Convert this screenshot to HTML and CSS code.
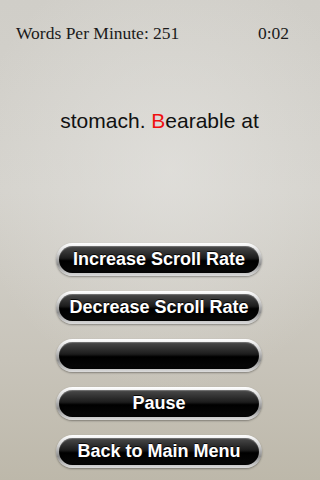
FILE: index.html
```html
<!DOCTYPE html>
<html>
<head>
<meta charset="utf-8">
<link rel="stylesheet" href="styles.css">
</head>
<body>
<div class="screen">
  <div class="header">
    <span class="wpm">Words Per Minute: 251</span>
    <span class="time">0:02</span>
  </div>
  <div class="reader">stomach. <span class="hl">B</span>earable at</div>
  <div class="buttons">
    <div class="btn"><span>Increase Scroll Rate</span></div>
    <div class="btn"><span>Decrease Scroll Rate</span></div>
    <div class="btn"><span></span></div>
    <div class="btn"><span>Pause</span></div>
    <div class="btn"><span>Back to Main Menu</span></div>
  </div>
</div>
</body>
</html>
```
FILE: styles.css
```css
html, body {
  margin: 0;
  padding: 0;
}
.screen {
  width: 320px;
  height: 480px;
  overflow: hidden;
  display: flex;
  flex-direction: column;
  background:
    radial-gradient(ellipse 200px 220px at 170px 170px, rgba(230,229,226,0.6), rgba(230,229,226,0) 100%),
    linear-gradient(#d0cec8 0%, #d4d2cc 40%, #c8c4ba 75%, #bdb8aa 100%);
}
.header {
  display: flex;
  justify-content: space-between;
  padding: 23px 31px 0 16px;
  font-family: "Liberation Serif", "DejaVu Serif", serif;
  font-size: 17.5px;
  color: #1a1a1a;
  line-height: 20px;
}
.reader {
  margin-top: 66px;
  text-align: center;
  font-family: "Liberation Sans", Arial, sans-serif;
  font-size: 21px;
  line-height: 24px;
  color: #111;
  padding-right: 1px;
}
.hl {
  color: #f01010;
}
.buttons {
  margin-top: 110px;
  display: flex;
  flex-direction: column;
  align-items: center;
  gap: 15px;
  padding-right: 2px;
}
.btn {
  width: 206px;
  height: 33px;
  box-sizing: border-box;
  border-radius: 17px;
  padding: 3px;
  background: linear-gradient(#ffffff 0%, #d4d4d4 30%, #8e8e8e 65%, #dcdcdc 100%);
  box-shadow: 0 1px 2px rgba(0,0,0,0.35);
  display: flex;
}
.btn span {
  flex: 1;
  border-radius: 14px;
  background: linear-gradient(#4a4a4a 0%, #1c1c1c 45%, #000 55%, #080808 100%);
  box-shadow: inset 0 1px 1px rgba(255,255,255,0.25), inset 0 -1px 2px rgba(0,0,0,0.6);
  color: #fff;
  font-family: "Liberation Sans", Arial, sans-serif;
  font-weight: bold;
  font-size: 18px;
  line-height: 27px;
  text-align: center;
  text-shadow: 0 -1px 0 rgba(0,0,0,0.8);
}
```
